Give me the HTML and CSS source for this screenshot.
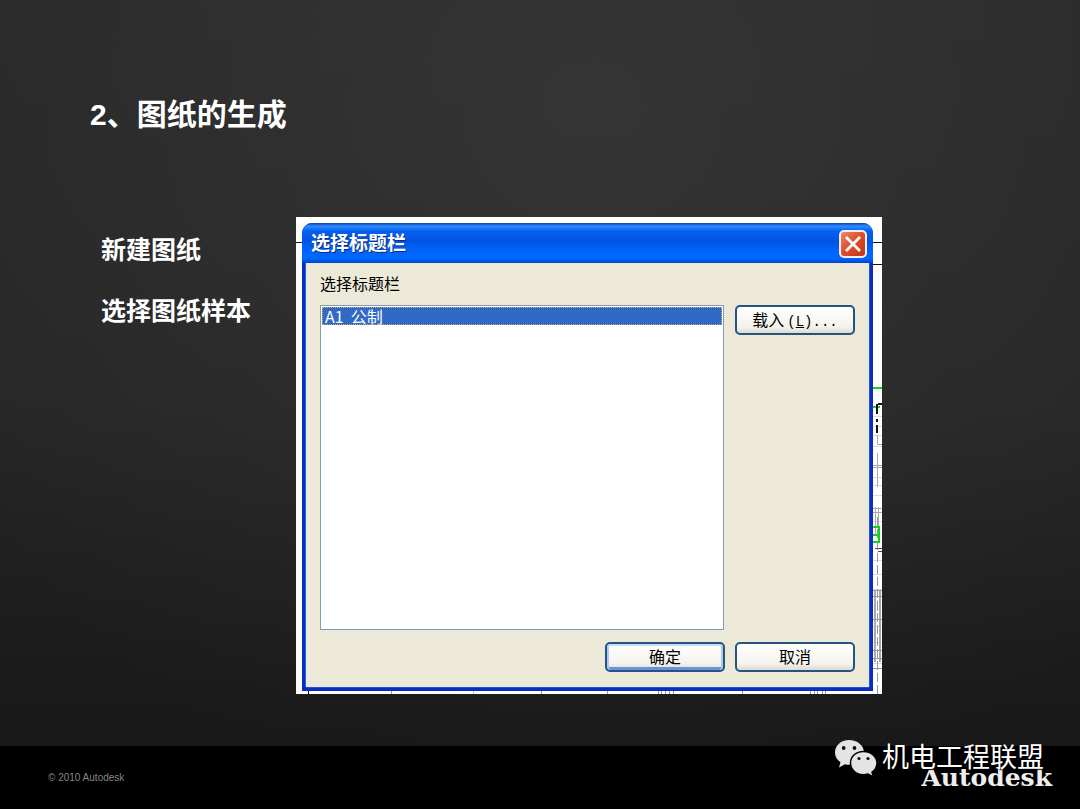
FILE: index.html
```html
<!DOCTYPE html>
<html lang="zh-CN">
<head>
<meta charset="utf-8">
<meta name="viewport" content="width=device-width, initial-scale=1">
<title>图纸的生成</title>
<link rel="stylesheet" href="styles.css">
</head>
<body>
<div class="slide">
  <main class="content">
    <h1 class="title">2、图纸的生成</h1>
    <div class="columns">
      <div class="notes">
        <p>新建图纸</p>
        <p>选择图纸样本</p>
      </div>
      <div class="shot">
        <svg class="plan plan-right" width="10" height="477" viewBox="0 0 10 477" fill="none" shape-rendering="crispEdges" aria-hidden="true">
          <path stroke="#111" d="M0 25.5h10M0 47.5h10"/>
          <path stroke="#ddd" d="M0 199.5h10M0 209.5h10M0 218.5h10M0 229.5h10M0 260.5h10M0 268.5h10M0 278.5h10M0 304.5h10M0 343.5h10M0 357.5h10M0 372.5h10M0 393.5h10M0 409.5h10M0 425.5h10M0 446.5h10"/>
          <path stroke="#aaa" d="M5.5 218v9h4M5.5 236v34M0 248.5h10M0 250.5h10M0 291.5h10M0 295.5h10M3.500 290v28M6.500 290v28"/>
          <path stroke="#999" stroke-dasharray="9 3" d="M5.500 300v177"/>
          <path stroke="#aaa" stroke-width="2" d="M3 373v72M8 373v72"/>
          <path stroke="#999" d="M0 373.500h10M0 379.500h10M0 402.500h10M0 433.500h10M0 441.500h10M0 451.500h10"/>
          <path stroke="#12d412" stroke-width="2" d="M0 171h10M0 190h8M0 310h7v15H0M0 318h7"/>
          <path stroke="#111" stroke-width="2" d="M6 187h4M5 187v10M5 202v3M5 208v8"/>
          <path stroke="#a020a0" d="M3 331.500h7"/>
          <path stroke="#087a18" d="M6 334.500h4"/>
        </svg>
        <svg class="plan plan-left" width="6" height="30" viewBox="0 0 6 30" aria-hidden="true"><path d="M0 25h6v1H0z" fill="#111"/></svg>
        <svg class="plan plan-bottom" width="570" height="3" viewBox="0 0 570 3" shape-rendering="crispEdges" fill="none" aria-hidden="true">
          <path stroke="#111" d="M12.500 0v3"/>
          <path stroke="#999" d="M95.500 0v3M245.500 0v3M311.500 0v3M446.500 0v3M362.500 0v3M365.500 0v3M369.500 0v3M373.500 0v3M377.500 0v3M514.500 0v3M518.500 0v3M521.500 0v3M526.500 0v3M529.500 0v3"/>
          <path stroke="#ccc" d="M177.500 0v3"/>
        </svg>
        <section class="dialog" aria-labelledby="dialog-title">
          <header class="titlebar">
            <h2 id="dialog-title">选择标题栏</h2>
            <button class="close" type="button" aria-label="关闭">
              <svg width="16" height="16" viewBox="0 0 16 16" aria-hidden="true"><path d="M2 2l12 12M14 2L2 14" stroke="#fff" stroke-width="2.800" stroke-linecap="square"/></svg>
            </button>
          </header>
          <div class="client">
            <label for="blocks">选择标题栏</label>
            <div class="picker">
              <select id="blocks" class="list" size="4">
                <option selected>A1&nbsp; 公制</option>
              </select>
              <button class="btn" type="button">载入<span class="latin">(<u>L</u>)...</span></button>
            </div>
            <div class="actions">
              <button class="btn btn-default" type="button">确定</button>
              <button class="btn" type="button">取消</button>
            </div>
          </div>
        </section>
      </div>
    </div>
  </main>
  <footer class="footer">
    <small>© 2010 Autodesk</small>
    <span class="brand">Autodesk</span>
    <div class="watermark">
      <svg width="44" height="38" viewBox="0 0 44 38" aria-hidden="true">
        <path fill="#e4e4e4" d="M15 1C7 1 1 6.500 1 13.500c0 4 2 7.500 5.500 9.800L5 28.500l6-3.300c1.300.4 2.700.6 4 .6 8.300 0 15-5.300 15-12.300S23.300 1 15 1z"/>
        <path fill="#e4e4e4" stroke="#000" stroke-width="1.500" d="M29.500 12.500c-7.500 0-13 5-13 11.500s5.500 11.700 13 11.700c1.600 0 3.100-.3 4.500-.7l5.500 2.800-1.500-4.600c3-2.200 5-5.400 5-9.200 0-6.500-6-11.500-13.500-11.500z"/>
        <g fill="#111"><circle cx="9.700" cy="9" r="1.900"/><circle cx="20.500" cy="9" r="1.900"/><circle cx="25" cy="19.500" r="1.600"/><circle cx="34" cy="19.500" r="1.600"/></g>
      </svg>
      <span>机电工程联盟</span>
    </div>
  </footer>
</div>
</body>
</html>
```
FILE: styles.css
```css
* { box-sizing: border-box; }

body {
  margin: 0;
  font-family: "Liberation Sans", "Noto Sans CJK SC", sans-serif;
  color: #fff;
  background: #000;
}

h1, h2, p { margin: 0; }

.slide {
  min-height: 100vh;
  display: flex;
  flex-direction: column;
  background:
    radial-gradient(ellipse 70% 90% at 55% 15%, rgba(255, 255, 255, 0.06), transparent),
    linear-gradient(#292929, #262626 50%, #181818 92%);
}

.content {
  flex: 1;
  padding: 95px 198px 52px 90px;
}

.title {
  font-size: 30px;
  line-height: 40px;
}

.columns {
  display: flex;
  margin-top: 82px;
}

.notes {
  flex: none;
  width: 206px;
  padding: 13px 0 0 11px;
  display: flex;
  flex-direction: column;
  gap: 21px;
  font-size: 25px;
  font-weight: 700;
  line-height: 40px;
}

.shot {
  position: relative;
  flex: 1;
  min-width: 0;
  padding: 6px 9px 3px 6px;
  background: #fff;
}

.plan { position: absolute; }
.plan-right { top: 0; right: 0; }
.plan-left { top: 0; left: 0; }
.plan-bottom { bottom: 0; left: 0; }

.dialog {
  position: relative;
  padding-bottom: 4px;
  color: #000;
  background: #0a2cc0;
  border-radius: 10px 10px 0 0;
  overflow: hidden;
}

.titlebar {
  display: flex;
  align-items: center;
  justify-content: space-between;
  height: 40px;
  padding: 2px 6px 0 9px;
  background: linear-gradient(#0842b8, #2e8cff 8%, #0661ee 20%, #0054e3 45%, #0064fa 70%, #0068ff 88%, #0045cc);
}

.titlebar h2 {
  color: #fff;
  font-size: 19px;
  line-height: 28px;
  text-shadow: 1px 1px 0 #082a80;
}

.close {
  display: grid;
  place-items: center;
  width: 28px;
  height: 28px;
  padding: 0;
  border: 2px solid #f3eef0;
  border-radius: 5px;
  background: linear-gradient(135deg, #e88a70, #dd4c28 50%, #c43410);
}

.client {
  margin: 0 4px;
  padding: 10px 14px 15px;
  background: #ece9d8;
  box-shadow: -1px 0 #1c62e8, 1px 0 #1c50e0, 0 1px #1c50e0;
}

.client label {
  display: block;
  font-size: 16px;
  line-height: 24px;
}

.picker {
  display: flex;
  align-items: flex-start;
  gap: 11px;
  margin-top: 8px;
}

.list {
  flex: 1;
  min-width: 0;
  height: 325px;
  padding: 1px;
  border: 1px solid #7f9db9;
  border-radius: 0;
  outline: 0;
  overflow: hidden;
  background: #fff;
  font: 16px "Noto Sans CJK SC", sans-serif;
}

.list option {
  display: flex;
  align-items: center;
  height: 18px;
  min-height: 18px;
  padding: 0 3px;
}

.list option:checked {
  color: #fff;
  background: linear-gradient(#316ac5, #316ac5);
  outline: 1px dotted #d0a568;
  outline-offset: -1px;
}

.btn {
  flex: none;
  width: 120px;
  height: 30px;
  padding: 0 0 3px;
  border: 2px solid #245580;
  border-radius: 5px;
  color: #000;
  background: linear-gradient(#fff, #f4f3ee 75%, #dedbd0);
  font: 16px "Noto Sans CJK SC", sans-serif;
  line-height: 22px;
}

.btn-default {
  box-shadow: inset 0 2px #c8dcfa, inset 2px 0 #b0c8f4, inset -2px 0 #b0c8f4, inset 0 -3px #6d90dc;
}

.latin {
  margin-left: 3px;
  font: 14px "Liberation Mono", monospace;
}

.actions {
  display: flex;
  justify-content: flex-end;
  gap: 10px;
  margin-top: 12px;
}

.footer {
  position: relative;
  display: flex;
  align-items: center;
  justify-content: space-between;
  min-height: 63px;
  padding: 0 28px 0 48px;
  background: #000;
}

.footer small {
  color: #858585;
  font-size: 10px;
  line-height: 16px;
}

.brand {
  color: #eee;
  font-family: "DejaVu Serif", serif;
  font-size: 25px;
  font-weight: 700;
  line-height: 30px;
}

.watermark {
  position: absolute;
  right: 36px;
  bottom: 31px;
  display: flex;
  align-items: center;
  gap: 4px;
  font-size: 27px;
  line-height: 40px;
  text-shadow: 1px 1px 1px #000;
}
```
